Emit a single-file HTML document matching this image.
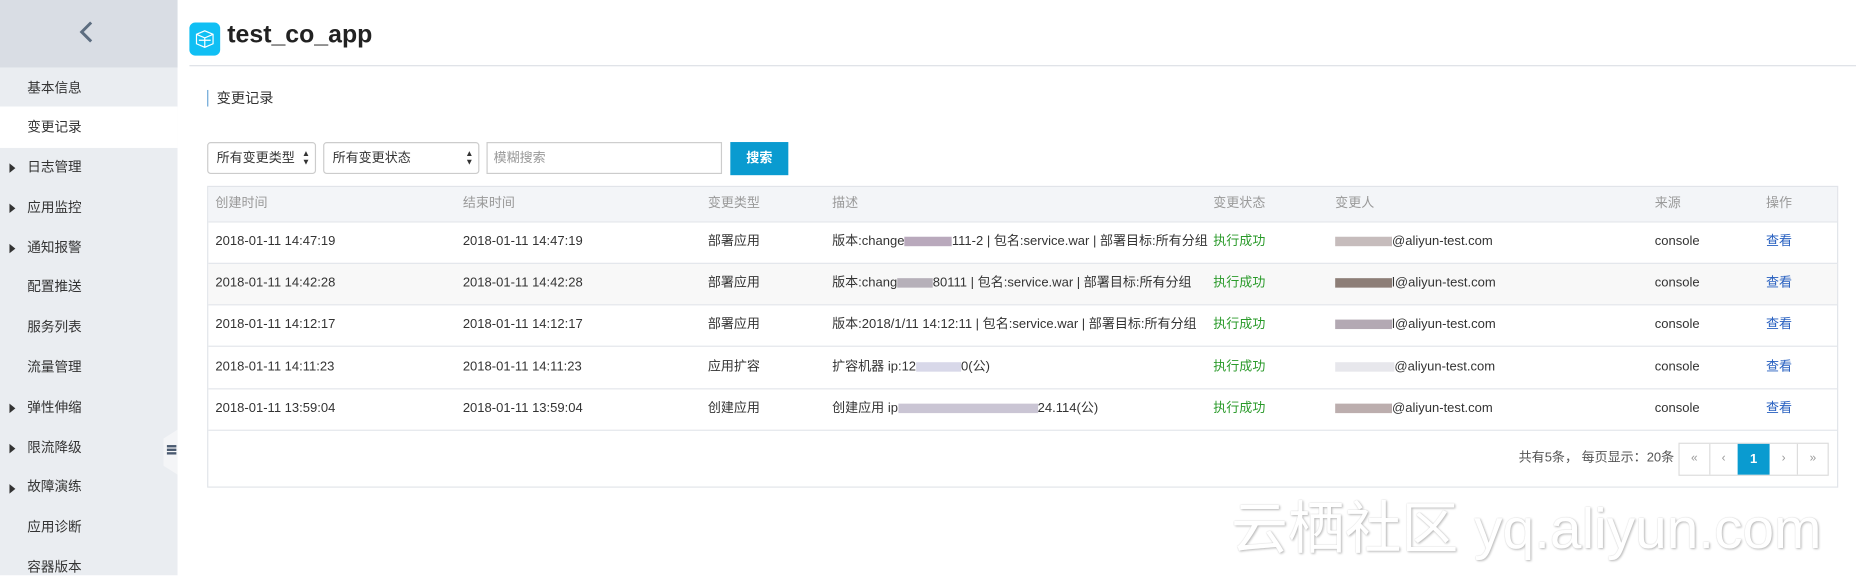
<!DOCTYPE html>
<html><head><meta charset="utf-8"><style>
*{box-sizing:border-box;margin:0;padding:0}
html,body{width:1856px;height:575px;overflow:hidden;background:#fff}
body{font-family:"Liberation Sans","Noto Sans CJK SC",sans-serif;font-size:12px;color:#333}
#w{position:absolute;left:0;top:0;width:1568px;height:486px;transform:scale(1.18367);transform-origin:0 0}
.side{position:absolute;left:0;top:0;width:150px;height:486px;background:#eaedf1}
.side .top{height:57px;background:#d9dde4;position:relative}
.side .item{position:absolute;left:23px;font-size:11.5px;color:#333;line-height:14px}
.side .act{position:absolute;left:0;top:90px;width:150px;height:35px;background:#fff}
.tri{position:absolute;left:8px;width:0;height:0;border-left:5px solid #333;border-top:4px solid transparent;border-bottom:4px solid transparent}
.abs{position:absolute}
.col{position:absolute;font-size:11px;white-space:nowrap;line-height:14px}
.hdr{color:#999}
.row{position:absolute;left:176px;width:1376px;border-top:1px solid #e3e6eb}
.pix{display:inline-block;height:8px;vertical-align:-1px}
</style></head><body><div id="w">
<div class="side">
 <div class="top"><svg class="abs" style="left:66px;top:17px" width="14" height="20"><path d="M11 2 L3 10 L11 18" stroke="#5d6d80" stroke-width="2.5" fill="none"/></svg></div>
 <div class="act"></div>
 <div class="item" style="top:68px">基本信息</div>
 <div class="item" style="top:101px">变更记录</div>
 <div class="tri" style="top:138px"></div><div class="item" style="top:135px">日志管理</div>
 <div class="tri" style="top:172px"></div><div class="item" style="top:169px">应用监控</div>
 <div class="tri" style="top:206px"></div><div class="item" style="top:203px">通知报警</div>
 <div class="item" style="top:236px">配置推送</div>
 <div class="item" style="top:270px">服务列表</div>
 <div class="item" style="top:304px">流量管理</div>
 <div class="tri" style="top:341px"></div><div class="item" style="top:338px">弹性伸缩</div>
 <div class="tri" style="top:375px"></div><div class="item" style="top:372px">限流降级</div>
 <div class="tri" style="top:409px"></div><div class="item" style="top:405px">故障演练</div>
 <div class="item" style="top:439px">应用诊断</div>
 <div class="item" style="top:473px">容器版本</div>
</div>
<div class="abs" style="left:138px;top:363px;width:12px;height:38px;background:#f4f5f7;clip-path:polygon(100% 0,100% 100%,0 80%,0 20%)"></div>
<div class="abs" style="left:141px;top:376px;width:8px;height:2px;background:#4a5a70;box-shadow:0 3px 0 #4a5a70,0 6px 0 #4a5a70"></div>
<div class="abs" style="left:160px;top:19px;width:26px;height:28px;border-radius:5px;background:#10bff4"></div>
<svg class="abs" style="left:164px;top:24px" width="18" height="18"><g stroke="#fff" stroke-width="1" fill="none"><path d="M9 2 L16 5 L16 13 L9 16 L2 13 L2 5 Z M2 5 L9 8 L16 5 M9 8 L9 16 M4 10 L14 10"/></g></svg>
<div class="abs" style="left:192px;top:17px;font-size:21px;font-weight:bold;color:#222;line-height:26px">test_co_app</div>
<div class="abs" style="left:160px;top:55px;width:1408px;height:1px;background:#dde0e5"></div>
<div class="abs" style="left:175px;top:76px;width:1px;height:14px;background:#6aa6d6"></div>
<div class="abs" style="left:183px;top:76px;font-size:12px;line-height:14px">变更记录</div>
<div class="abs" style="left:175px;top:120px;width:92px;height:27px;border:1px solid #ccc;border-radius:3px;padding:6px 7px;font-size:11px;line-height:14px">所有变更类型<span style="position:absolute;right:4px;top:6px;font-size:7px;line-height:7px">▲<br>▼</span></div>
<div class="abs" style="left:273px;top:120px;width:132px;height:27px;border:1px solid #ccc;border-radius:3px;padding:6px 7px;font-size:11px;line-height:14px">所有变更状态<span style="position:absolute;right:4px;top:6px;font-size:7px;line-height:7px">▲<br>▼</span></div>
<div class="abs" style="left:411px;top:120px;width:199px;height:27px;border:1px solid #ccc;padding:6px 5px;font-size:11px;color:#999;line-height:14px">模糊搜索</div>
<div class="abs" style="left:617px;top:120px;width:49px;height:28px;background:#0a9bd0;color:#fff;font-weight:bold;font-size:11px;text-align:center;line-height:28px">搜索</div>
<div class="abs" style="left:175px;top:157px;width:1378px;height:255px;border:1px solid #e1e4e9"></div>
<div class="abs" style="left:176px;top:158px;width:1376px;height:29px;background:#f3f5f8"></div>
<div class="abs" style="left:176px;top:222px;width:1376px;height:35px;background:#f8f8f8"></div>
<div class="col hdr" style="left:182px;top:165px">创建时间</div><div class="col hdr" style="left:391px;top:165px">结束时间</div><div class="col hdr" style="left:598px;top:165px">变更类型</div><div class="col hdr" style="left:703px;top:165px">描述</div><div class="col hdr" style="left:1025px;top:165px">变更状态</div><div class="col hdr" style="left:1128px;top:165px">变更人</div><div class="col hdr" style="left:1398px;top:165px">来源</div><div class="col hdr" style="left:1492px;top:165px">操作</div>
<div class="row" style="top:187px"></div><div class="row" style="top:222px"></div><div class="row" style="top:257px"></div><div class="row" style="top:292px"></div><div class="row" style="top:328px"></div><div class="row" style="top:363px"></div>

<div class="col" style="left:182px;top:197px">2018-01-11 14:47:19</div><div class="col" style="left:391px;top:197px">2018-01-11 14:47:19</div><div class="col" style="left:598px;top:197px">部署应用</div><div class="col" style="left:703px;top:197px">版本:change<span class="pix" style="background:#8a7090;width:40px;opacity:.6"></span>111-2 | 包名:service.war | 部署目标:所有分组</div><div class="col" style="left:1025px;top:197px;color:#2a9a2a">执行成功</div><div class="col" style="left:1128px;top:197px"><span class="pix" style="width:48px;background:#a09090;opacity:.6"></span>@aliyun-test.com</div><div class="col" style="left:1398px;top:197px">console</div><div class="col" style="left:1492px;top:197px;color:#2860c0">查看</div>

<div class="col" style="left:182px;top:232px">2018-01-11 14:42:28</div><div class="col" style="left:391px;top:232px">2018-01-11 14:42:28</div><div class="col" style="left:598px;top:232px">部署应用</div><div class="col" style="left:703px;top:232px">版本:chang<span class="pix" style="background:#8a8090;width:30px;opacity:.6"></span>80111 | 包名:service.war | 部署目标:所有分组</div><div class="col" style="left:1025px;top:232px;color:#2a9a2a">执行成功</div><div class="col" style="left:1128px;top:232px"><span class="pix" style="width:48px;background:#604a40;opacity:.7"></span>l@aliyun-test.com</div><div class="col" style="left:1398px;top:232px">console</div><div class="col" style="left:1492px;top:232px;color:#2860c0">查看</div>

<div class="col" style="left:182px;top:267px">2018-01-11 14:12:17</div><div class="col" style="left:391px;top:267px">2018-01-11 14:12:17</div><div class="col" style="left:598px;top:267px">部署应用</div><div class="col" style="left:703px;top:267px">版本:2018/1/11 14:12:11 | 包名:service.war | 部署目标:所有分组</div><div class="col" style="left:1025px;top:267px;color:#2a9a2a">执行成功</div><div class="col" style="left:1128px;top:267px"><span class="pix" style="width:48px;background:#807080;opacity:.6"></span>l@aliyun-test.com</div><div class="col" style="left:1398px;top:267px">console</div><div class="col" style="left:1492px;top:267px;color:#2860c0">查看</div>

<div class="col" style="left:182px;top:303px">2018-01-11 14:11:23</div><div class="col" style="left:391px;top:303px">2018-01-11 14:11:23</div><div class="col" style="left:598px;top:303px">应用扩容</div><div class="col" style="left:703px;top:303px">扩容机器 ip:12<span class="pix" style="background:#9090c0;width:38px;opacity:.35"></span>0(公)</div><div class="col" style="left:1025px;top:303px;color:#2a9a2a">执行成功</div><div class="col" style="left:1128px;top:303px"><span class="pix" style="width:50px;background:#b0b0c0;opacity:.3"></span>@aliyun-test.com</div><div class="col" style="left:1398px;top:303px">console</div><div class="col" style="left:1492px;top:303px;color:#2860c0">查看</div>

<div class="col" style="left:182px;top:338px">2018-01-11 13:59:04</div><div class="col" style="left:391px;top:338px">2018-01-11 13:59:04</div><div class="col" style="left:598px;top:338px">创建应用</div><div class="col" style="left:703px;top:338px">创建应用 ip<span class="pix" style="background:#8a7fa0;width:118px;opacity:.45"></span>24.114(公)</div><div class="col" style="left:1025px;top:338px;color:#2a9a2a">执行成功</div><div class="col" style="left:1128px;top:338px"><span class="pix" style="width:48px;background:#907878;opacity:.6"></span>@aliyun-test.com</div><div class="col" style="left:1398px;top:338px">console</div><div class="col" style="left:1492px;top:338px;color:#2860c0">查看</div>

<div class="col" style="left:1283px;top:380px;color:#555">共有5条， 每页显示：20条</div>
<div class="abs" style="left:1418px;top:374px;width:127px;height:28px;border:1px solid #ddd;display:flex;font-size:10px;color:#999">
<div style="width:26px;text-align:center;line-height:26px;border-right:1px solid #ddd">«</div><div style="width:23px;text-align:center;line-height:26px">‹</div><div style="width:28px;text-align:center;line-height:26px;background:#0a9bd0;color:#fff;font-weight:bold;font-size:11px">1</div><div style="width:24px;text-align:center;line-height:26px;border-right:1px solid #ddd">›</div><div style="width:25px;text-align:center;line-height:26px">»</div></div>
<div class="abs" style="left:1040px;top:420px;font-size:48px;line-height:56px;color:#fff;text-shadow:1px 1px 2px #bbb,0 0 1px #ccc;white-space:nowrap">云栖社区 yq.aliyun.com</div>
</div></body></html>
